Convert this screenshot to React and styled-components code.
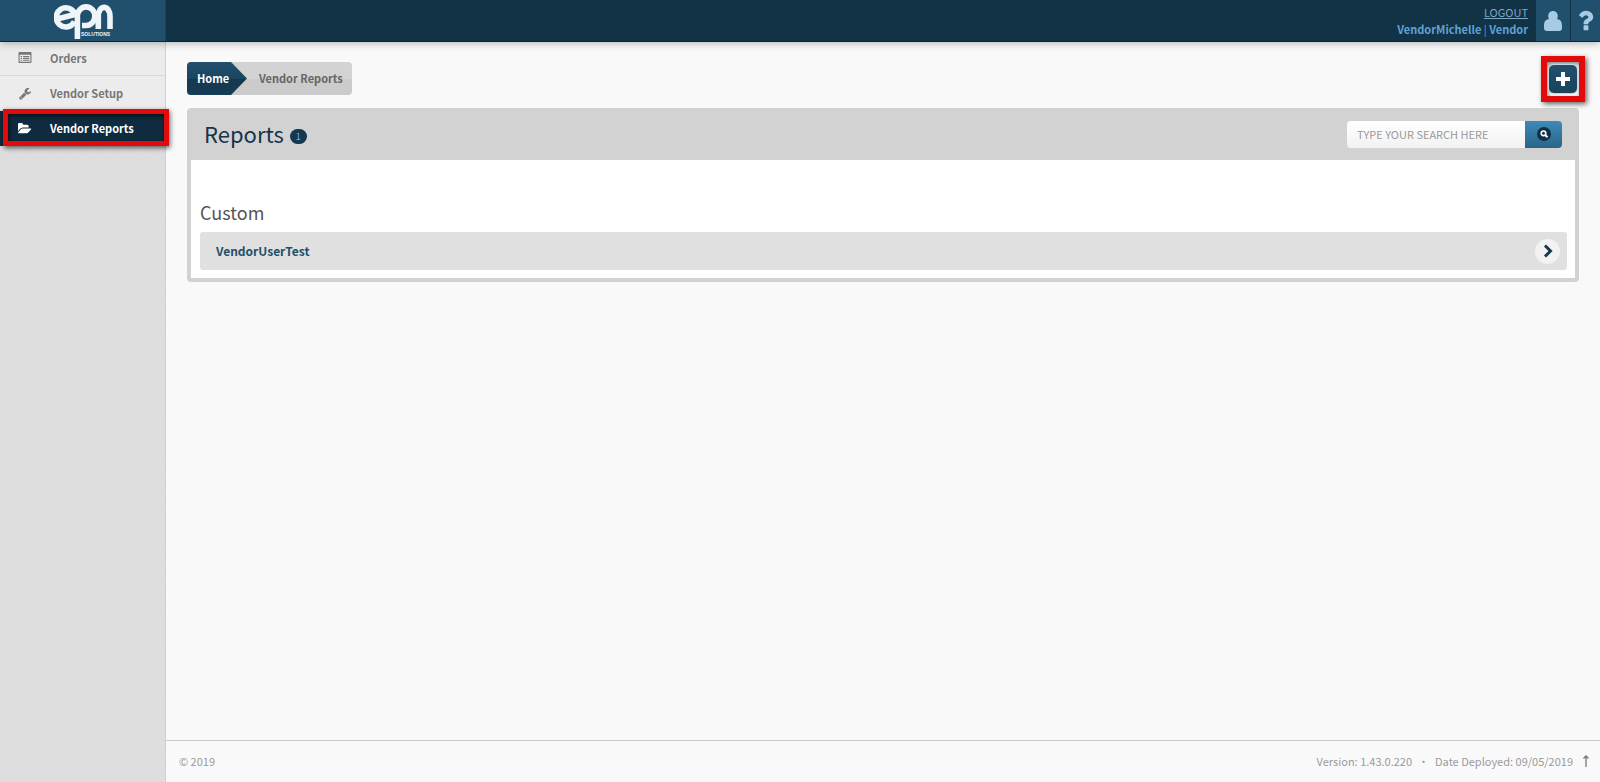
import React, { useState } from 'react';
import styled, { createGlobalStyle, css } from 'styled-components';

const icons = {
  user: {
    box: '0 0 18 20',
    d: 'M9 0C11.900 0 13.800 2.200 13.800 5C13.800 6.200 13.500 7.300 12.900 8.200C16.600 8.200 18 10.500 18 15.500V17C18 19 17 20 15 20H3C1 20 0 19 0 17V15.500C0 10.500 1.400 8.200 5.100 8.200C4.500 7.300 4.200 6.200 4.200 5C4.200 2.200 6.100 0 9 0z',
  },
  question: {
    box: '0 0 1792 1792',
    d: 'M1088 1256v240q0 16-12 28t-28 12h-240q-16 0-28-12t-12-28v-240q0-16 12-28t28-12h240q16 0 28 12t12 28zm316-600q0 54-15.500 101t-35 76.500-55 59.500-57.500 43.500-61 35.500q-41 23-68.500 65t-27.500 67q0 17-12 32.500t-28 15.500h-240q-15 0-25.500-18.500t-10.500-37.500v-45q0-83 65-156.500t143-108.500q59-27 84-56t25-76q0-42-46.500-74t-107.500-32q-65 0-108 29-35 25-107 115-13 16-31 16-12 0-25-8l-164-125q-13-10-15.500-25t5.500-28q160-266 464-266 80 0 161 31t146 83 106 127.500 41 158.500z',
  },
  wrench: {
    box: '0 0 1792 1792',
    d: 'M448 1472q0-26-19-45t-45-19-45 19-19 45 19 45 45 19 45-19 19-45zm644-420l-682 682q-37 37-90 37-52 0-91-37l-106-108q-38-36-38-90 0-53 38-91l681-681q39 98 114.500 173.500t173.500 114.500zm634-435q0 39-23 106-47 134-164.500 217.500t-258.500 83.500q-185 0-316.500-131.500t-131.500-316.500 131.500-316.500 316.500-131.500q58 0 121.500 16.500t107.500 46.500q16 11 16 28t-16 28l-293 169v224l193 107q5-3 79-48.500t135.500-81 70.500-35.500q15 0 23.500 10t8.500 25z',
  },
  folder: {
    box: '0 0 1920 1792',
    d: 'M1815 952q0 31-31 66l-336 396q-43 51-120.500 86.500t-143.500 35.500h-1088q-34 0-60.500-13t-26.500-43q0-31 31-66l336-396q43-51 120.500-86.500t143.500-35.500h1088q34 0 60.500 13t26.500 43zm-343-344v160h-832q-94 0-197 47.500t-164 119.500l-337 396-5 6q0-4-.5-12.500t-.5-12.500v-960q0-92 66-158t158-66h320q92 0 158 66t66 158v32h544q92 0 158 66t66 158z',
  },
  list: {
    box: '0 0 12 12',
    d: 'M.8 1h10.400a.8.8 0 0 1 .8.8v8.400a.8.8 0 0 1-.8.8h-10.400a.8.8 0 0 1-.8-.8v-8.400a.8.8 0 0 1 .8-.8zM1 3.500v6.500h10v-6.500zM2 4.500h1.300v1h-1.300zM4.200 4.500h5.800v1h-5.800zM2 6.300h1.300v1h-1.300zM4.200 6.300h5.800v1h-5.800zM2 8.100h1.300v1h-1.300zM4.200 8.100h5.800v1h-5.800z',
  },
};

const Icon = ({ name, width, height }) => (
  <svg width={width} height={height} viewBox={icons[name].box} fill="currentColor" fillRule="evenodd" aria-hidden="true">
    <path d={icons[name].d} />
  </svg>
);

const Logo = () => (
  <svg width="60" height="37" viewBox="0 0 60 37" fill="none" stroke="#eef4f8" strokeWidth="5.600" role="img" aria-label="EPN Solutions">
    <path d="M5 16.500L21 12.500A9.600 9.600 0 1 0 20.500 19.500" />
    <path d="M23.400 37V14A8.700 9.300 0 1 1 32 23.500H28" />
    <path d="M44.300 27V14A5.800 8.600 0 0 1 56 14V27" />
    <text x="27" y="34" fill="#eef4f8" stroke="none" fontSize="5" fontWeight="700" fontFamily="Liberation Sans, sans-serif">SOLUTIONS</text>
  </svg>
);

const menu = [
  { id: 'orders', label: 'Orders', icon: 'list' },
  { id: 'setup', label: 'Vendor Setup', icon: 'wrench' },
  { id: 'reports', label: 'Vendor Reports', icon: 'folder', active: true },
];

const reports = [{ id: 1, name: 'VendorUserTest' }];

const App = () => {
  const [search, setSearch] = useState('');

  return (
    <Page>
      <GlobalStyle />
      <Header>
        <Brand href="#home"><Logo /></Brand>
        <Account>
          <Logout href="#logout">LOGOUT</Logout>
          <UserName><b>VendorMichelle</b> | <b>Vendor</b></UserName>
        </Account>
        <HeaderButton type="button" aria-label="Profile"><Icon name="user" width={18} height={20} /></HeaderButton>
        <HeaderButton type="button" aria-label="Help" $narrow><Icon name="question" width={27} height={27} /></HeaderButton>
      </Header>
      <Body>
        <Sidebar>
          {menu.map((item) => (
            <MenuItem key={item.id} href={`#${item.id}`} $active={item.active}>
              <MenuIcon><Icon name={item.icon} width={14} height={13} /></MenuIcon>
              {item.label}
              {item.active && <MenuMark />}
            </MenuItem>
          ))}
        </Sidebar>
        <Main>
          <Content>
            <TopBar>
              <Breadcrumb>
                <HomeLink href="#home">Home</HomeLink>
                <Crumb>Vendor Reports</Crumb>
              </Breadcrumb>
              <AddFrame>
                <AddButton type="button" aria-label="Add report">
                  <svg width="14" height="14" viewBox="0 0 14 14" fill="#fff">
                    <path d="M5 0h4v5h5v4h-5v5h-4v-5h-5v-4h5z" />
                  </svg>
                </AddButton>
              </AddFrame>
            </TopBar>
            <Panel>
              <PanelHeader>
                <Title>Reports</Title>
                <Badge>{reports.length}</Badge>
                <SearchForm onSubmit={(e) => e.preventDefault()}>
                  <SearchInput
                    aria-label="Search"
                    placeholder="TYPE YOUR SEARCH HERE"
                    value={search}
                    onChange={(e) => setSearch(e.target.value)}
                  />
                  <SearchButton aria-label="Search">
                    <svg width="14" height="14" viewBox="0 0 14 14" fill="none">
                      <circle cx="7" cy="7" r="7" fill="#0e2f44" />
                      <circle cx="6.500" cy="6.300" r="2.300" stroke="#fff" strokeWidth="1.600" />
                      <path d="M8.200 8L10.500 10.300" stroke="#fff" strokeWidth="2" />
                    </svg>
                  </SearchButton>
                </SearchForm>
              </PanelHeader>
              <PanelBody>
                <GroupTitle>Custom</GroupTitle>
                {reports.map((report) => (
                  <ReportRow key={report.id} href={`#report-${report.id}`}>
                    {report.name}
                    <Arrow>
                      <svg width="10" height="14" viewBox="0 0 10 14" fill="none" stroke="#14394f" strokeWidth="3">
                        <path d="M2 1.500L7.500 7L2 12.500" />
                      </svg>
                    </Arrow>
                  </ReportRow>
                ))}
              </PanelBody>
            </Panel>
          </Content>
          <Footer>
            <span>© 2019</span>
            <Version>
              <span>Version: 1.43.0.220</span>
              <span>•</span>
              <span>Date Deployed: 09/05/2019</span>
            </Version>
            <ToTop href="#top" aria-label="Back to top">
              <svg width="6" height="12" viewBox="0 0 6 12" fill="none" stroke="#777">
                <path d="M3 12V1M0.500 3.500L3 1L5.500 3.500" strokeWidth="1.300" />
              </svg>
            </ToTop>
          </Footer>
        </Main>
      </Body>
    </Page>
  );
}

const GlobalStyle = createGlobalStyle`
  * {
    box-sizing: border-box;
  }

  body {
    margin: 0;
    background: #f9f9f9;
    color: #555;
    font-family: "Noto Sans CJK SC", "Open Sans", sans-serif;
    font-size: 11px;
    line-height: 16px;
  }

  a {
    color: inherit;
    text-decoration: none;
  }

  button, input {
    border: 0;
    padding: 0;
    font: inherit;
  }
`;
const Page = styled.div`
  display: flex;
  flex-direction: column;
  min-height: 100vh;
`;
const Header = styled.header`
  position: relative;
  z-index: 1;
  display: flex;
  height: 42px;
  background: #123246;
  border-bottom: 1px solid #0d2636;
  box-shadow: 0 1px 8px rgba(0, 0, 0, 0.3);
`;
const Brand = styled.a`
  display: flex;
  align-items: center;
  justify-content: center;
  width: 166px;
  padding-left: 3px;
  background: #21506e;
  border-right: 1px solid #1b4158;
`;
const Account = styled.div`
  display: flex;
  flex-direction: column;
  align-items: flex-end;
  justify-content: center;
  margin-left: auto;
  padding-right: 8px;
  color: #5f9fcb;
  line-height: 17px;
`;
const Logout = styled.a`
  color: #7fa8c4;
  text-decoration: underline;
`;
const UserName = styled.span`
  color: #5da2d5;
`;
const HeaderButton = styled.button`
  display: flex;
  align-items: center;
  justify-content: center;
  width: ${({ $narrow }) => ($narrow ? '30px' : '34px')};
  background: #21506e;
  border-left: ${({ $narrow }) => ($narrow ? '1px solid #123246' : '0')};
  color: #a6cbe3;
`;
const Body = styled.div`
  display: flex;
  flex: 1;
`;
const Sidebar = styled.nav`
  width: 166px;
  border-right: 1px solid #cfcfcf;
  background: repeating-linear-gradient(45deg, #dbdbdb 0 1px, #dfdfdf 1px 3px);
`;
const MenuItem = styled.a`
  position: relative;
  display: flex;
  align-items: center;
  height: 35px;
  padding-left: 18px;
  background: #ececec;
  border-bottom: 1px solid #d9d9d9;
  color: #777;
  font-weight: 700;

  &:first-child {
    height: 34px;
    padding-bottom: 2px;
  }

  ${({ $active }) => $active && css`
    background: #0e2b3f;
    border-color: #0e2b3f;
    color: #fff;
  `}
`;
const MenuIcon = styled.span`
  display: flex;
  width: 32px;
`;
const MenuMark = styled.span`
  position: absolute;
  inset: -2px -4px -1px 3px;
  border: 5px solid #e20a0a;
  box-shadow: 1px 2px 5px rgba(0, 0, 0, 0.6), inset 1px 2px 4px rgba(0, 0, 0, 0.6);
`;
const Main = styled.main`
  display: flex;
  flex: 1;
  flex-direction: column;
  min-width: 0;
`;
const Content = styled.div`
  flex: 1;
  padding: 13px 21px 20px;
`;
const TopBar = styled.div`
  display: flex;
  align-items: center;
  justify-content: space-between;
  height: 47px;
  margin: 0 -6px 6px 0;
`;
const Breadcrumb = styled.nav`
  display: flex;
  height: 33px;
  overflow: hidden;
  border-radius: 4px;
  background: linear-gradient(#d3d3d3 50%, #cbcbcb 50%);
  line-height: 33px;
  font-weight: 700;
`;
const HomeLink = styled.a`
  width: 60px;
  padding-left: 10px;
  background: linear-gradient(#21506e, #1a4562 50%, #14384f 50%, #163d56);
  clip-path: polygon(0 0, 44px 0, 100% 50%, 44px 100%, 0 100%);
  color: #fff;
`;
const Crumb = styled.span`
  padding: 0 9px 0 12px;
  color: #666;
`;
const AddFrame = styled.div`
  border: 6px solid #e20a0a;
  padding: 2px 1px;
  box-shadow: 2px 2px 5px rgba(0, 0, 0, 0.6), inset 1px 2px 4px rgba(0, 0, 0, 0.5);
`;
const AddButton = styled.button`
  display: flex;
  align-items: center;
  justify-content: center;
  width: 30px;
  height: 30px;
  border: 1px solid #c9d6de;
  border-radius: 6px;
  background: linear-gradient(#21506e, #1a435c);
`;
const Panel = styled.section`
  border: 4px solid #d2d2d2;
  border-radius: 4px;
  background: #fff;
`;
const PanelHeader = styled.div`
  display: flex;
  align-items: center;
  height: 48px;
  padding: 0 13px 4px;
  background: #d2d2d2;
`;
const Title = styled.h1`
  margin: 0 6px 0 0;
  padding-bottom: 2px;
  color: #14344a;
  font-size: 22px;
  font-weight: 400;
  line-height: 28px;
`;
const Badge = styled.span`
  margin-top: 5px;
  width: 17px;
  border-radius: 8px;
  background: #14384f;
  color: #6fb0dc;
  font-size: 9px;
  line-height: 15px;
  text-align: center;
`;
const SearchForm = styled.form`
  display: flex;
  height: 27px;
  margin-left: auto;
`;
const SearchInput = styled.input`
  width: 178px;
  padding: 0 10px;
  border-radius: 4px 0 0 4px;
  background: linear-gradient(#fff, #f2f2f2);
  color: #555;

  &::placeholder {
    color: #999;
  }
`;
const SearchButton = styled.button`
  display: flex;
  align-items: center;
  justify-content: center;
  width: 37px;
  border-radius: 0 4px 4px 0;
  background: linear-gradient(#3c8bb8, #2a6488);
`;
const PanelBody = styled.div`
  padding: 39px 8px 8px 9px;
`;
const GroupTitle = styled.h2`
  margin: 0 0 7px;
  color: #555;
  font-size: 18px;
  font-weight: 400;
  line-height: 26px;
`;
const ReportRow = styled.a`
  display: flex;
  align-items: center;
  justify-content: space-between;
  height: 38px;
  padding: 0 7px 0 16px;
  border-radius: 3px;
  background: #e0e0e0;
  color: #21506a;
  font-size: 12px;
  font-weight: 700;
`;
const Arrow = styled.span`
  display: flex;
  align-items: center;
  justify-content: center;
  width: 25px;
  height: 25px;
  border-radius: 50%;
  background: #f2f2f2;
`;
const Footer = styled.footer`
  display: flex;
  align-items: center;
  height: 42px;
  padding: 0 11px 2px 13px;
  border-top: 1px solid #ccc;
  color: #999;
`;
const Version = styled.div`
  display: flex;
  gap: 6px;
  margin-left: auto;
`;
const ToTop = styled.a`
  display: flex;
  margin-left: 10px;
`;

export default App;
